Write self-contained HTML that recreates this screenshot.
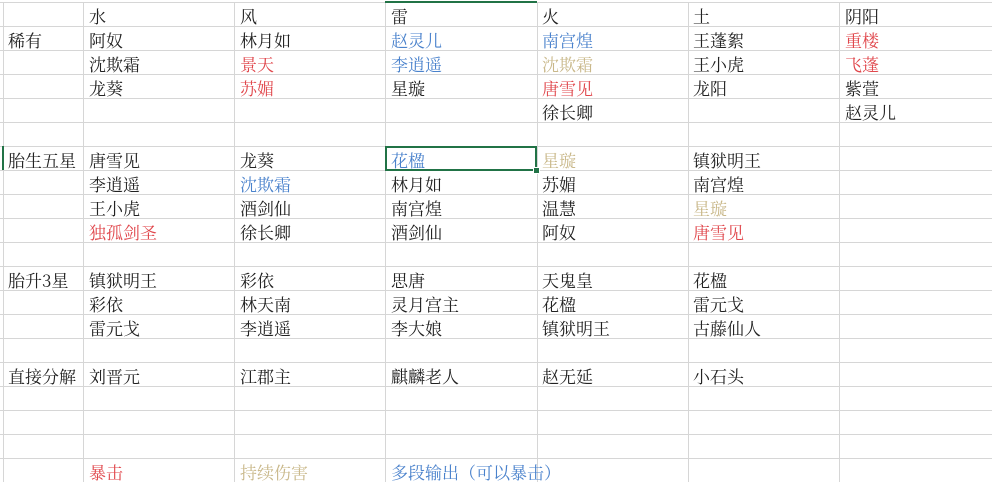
<!DOCTYPE html>
<html><head><meta charset="utf-8"><style>
html,body{margin:0;padding:0;background:#fff;}
body{width:992px;height:482px;position:relative;overflow:hidden;font-family:"Noto Serif CJK SC","Liberation Serif",serif;font-size:17px;color:#222;}
.h{position:absolute;left:0;width:992px;height:1px;background:#d6d6d6;}
.v{position:absolute;top:2px;height:480px;width:1px;background:#d6d6d6;}
.c{position:absolute;height:24px;line-height:24px;white-space:nowrap;margin-top:1px;}
.r{color:#e0474c}.b{color:#4a82cc}.t{color:#c9b88a}
</style></head><body>
<div class="h" style="top:2px"></div>
<div class="h" style="top:26px"></div><div class="h" style="top:50px"></div><div class="h" style="top:74px"></div><div class="h" style="top:98px"></div><div class="h" style="top:122px"></div><div class="h" style="top:146px"></div><div class="h" style="top:170px"></div><div class="h" style="top:194px"></div><div class="h" style="top:218px"></div><div class="h" style="top:242px"></div><div class="h" style="top:266px"></div><div class="h" style="top:290px"></div><div class="h" style="top:314px"></div><div class="h" style="top:338px"></div><div class="h" style="top:362px"></div><div class="h" style="top:386px"></div><div class="h" style="top:410px"></div><div class="h" style="top:434px"></div><div class="h" style="top:458px"></div>
<div class="v" style="left:3px"></div><div class="v" style="left:83px"></div><div class="v" style="left:234px"></div><div class="v" style="left:385px"></div><div class="v" style="left:537px"></div><div class="v" style="left:688px"></div><div class="v" style="left:839px"></div>
<div style="position:absolute;left:385px;top:1px;width:152px;height:2px;background:#217346"></div>
<div style="position:absolute;left:2px;top:146px;width:2px;height:24px;background:#217346"></div>
<div style="position:absolute;left:385px;top:146px;width:148px;height:21px;border:2px solid #217346"></div>
<div style="position:absolute;left:533px;top:167px;width:5px;height:5px;background:#217346;border:1px solid #fff"></div>

<div class="c" style="left:89px;top:3px">水</div><div class="c" style="left:240px;top:3px">风</div><div class="c" style="left:391px;top:3px">雷</div><div class="c" style="left:542px;top:3px">火</div><div class="c" style="left:693px;top:3px">土</div><div class="c" style="left:845px;top:3px">阴阳</div>

<div class="c" style="left:8px;top:27px">稀有</div><div class="c" style="left:89px;top:27px">阿奴</div><div class="c" style="left:240px;top:27px">林月如</div><div class="c b" style="left:391px;top:27px">赵灵儿</div><div class="c b" style="left:542px;top:27px">南宫煌</div><div class="c" style="left:693px;top:27px">王蓬絮</div><div class="c r" style="left:845px;top:27px">重楼</div>
<div class="c" style="left:89px;top:51px">沈欺霜</div><div class="c r" style="left:240px;top:51px">景天</div><div class="c b" style="left:391px;top:51px">李逍遥</div><div class="c t" style="left:542px;top:51px">沈欺霜</div><div class="c" style="left:693px;top:51px">王小虎</div><div class="c r" style="left:845px;top:51px">飞蓬</div>
<div class="c" style="left:89px;top:75px">龙葵</div><div class="c r" style="left:240px;top:75px">苏媚</div><div class="c" style="left:391px;top:75px">星璇</div><div class="c r" style="left:542px;top:75px">唐雪见</div><div class="c" style="left:693px;top:75px">龙阳</div><div class="c" style="left:845px;top:75px">紫萱</div>
<div class="c" style="left:542px;top:99px">徐长卿</div><div class="c" style="left:845px;top:99px">赵灵儿</div>

<div class="c" style="left:8px;top:147px">胎生五星</div><div class="c" style="left:89px;top:147px">唐雪见</div><div class="c" style="left:240px;top:147px">龙葵</div><div class="c b" style="left:391px;top:147px">花楹</div><div class="c t" style="left:542px;top:147px">星璇</div><div class="c" style="left:693px;top:147px">镇狱明王</div>
<div class="c" style="left:89px;top:171px">李逍遥</div><div class="c b" style="left:240px;top:171px">沈欺霜</div><div class="c" style="left:391px;top:171px">林月如</div><div class="c" style="left:542px;top:171px">苏媚</div><div class="c" style="left:693px;top:171px">南宫煌</div>
<div class="c" style="left:89px;top:195px">王小虎</div><div class="c" style="left:240px;top:195px">酒剑仙</div><div class="c" style="left:391px;top:195px">南宫煌</div><div class="c" style="left:542px;top:195px">温慧</div><div class="c t" style="left:693px;top:195px">星璇</div>
<div class="c r" style="left:89px;top:219px">独孤剑圣</div><div class="c" style="left:240px;top:219px">徐长卿</div><div class="c" style="left:391px;top:219px">酒剑仙</div><div class="c" style="left:542px;top:219px">阿奴</div><div class="c r" style="left:693px;top:219px">唐雪见</div>

<div class="c" style="left:8px;top:267px">胎升3星</div><div class="c" style="left:89px;top:267px">镇狱明王</div><div class="c" style="left:240px;top:267px">彩依</div><div class="c" style="left:391px;top:267px">思唐</div><div class="c" style="left:542px;top:267px">天鬼皇</div><div class="c" style="left:693px;top:267px">花楹</div>
<div class="c" style="left:89px;top:291px">彩依</div><div class="c" style="left:240px;top:291px">林天南</div><div class="c" style="left:391px;top:291px">灵月宫主</div><div class="c" style="left:542px;top:291px">花楹</div><div class="c" style="left:693px;top:291px">雷元戈</div>
<div class="c" style="left:89px;top:315px">雷元戈</div><div class="c" style="left:240px;top:315px">李逍遥</div><div class="c" style="left:391px;top:315px">李大娘</div><div class="c" style="left:542px;top:315px">镇狱明王</div><div class="c" style="left:693px;top:315px">古藤仙人</div>

<div class="c" style="left:8px;top:363px">直接分解</div><div class="c" style="left:89px;top:363px">刘晋元</div><div class="c" style="left:240px;top:363px">江郡主</div><div class="c" style="left:391px;top:363px">麒麟老人</div><div class="c" style="left:542px;top:363px">赵无延</div><div class="c" style="left:693px;top:363px">小石头</div>

<div class="c r" style="left:89px;top:459px">暴击</div><div class="c t" style="left:240px;top:459px">持续伤害</div><div class="c b" style="left:391px;top:459px">多段输出（可以暴击）</div>
</body></html>
